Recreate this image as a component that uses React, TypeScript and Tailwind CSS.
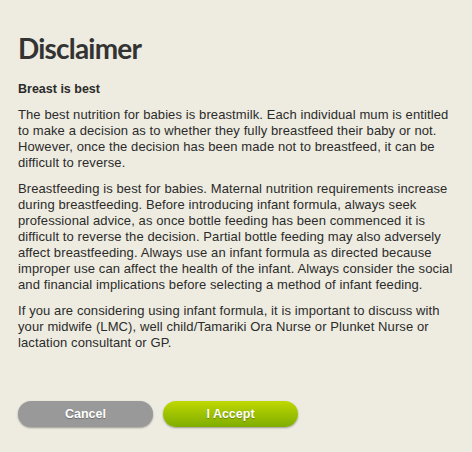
export default function App() {
  return (
    <div className="w-[472px] h-[452px] bg-[#eeebe0] px-[18px] pt-[30px] text-[#2b2b2b]">
      {/* heading */}
      <h1 className="text-[28px] leading-[36px] font-bold tracking-[-0.8px] text-[#333] font-['Lato',sans-serif]">
        Disclaimer
      </h1>

      <div className="mt-[15px] text-[13px] leading-[16px] tracking-[0.1px] font-['Liberation_Sans',Arial,sans-serif] flex flex-col gap-[10px] w-[450px] whitespace-nowrap">
        <p className="font-bold text-[12.5px] tracking-normal">Breast is best</p>
        <p>
          The best nutrition for babies is breastmilk. Each individual mum is entitled
          <br />
          to make a decision as to whether they fully breastfeed their baby or not.
          <br />
          However, once the decision has been made not to breastfeed, it can be
          <br />
          difficult to reverse.
        </p>
        <p>
          Breastfeeding is best for babies. Maternal nutrition requirements increase
          <br />
          during breastfeeding. Before introducing infant formula, always seek
          <br />
          professional advice, as once bottle feeding has been commenced it is
          <br />
          difficult to reverse the decision. Partial bottle feeding may also adversely
          <br />
          affect breastfeeding. Always use an infant formula as directed because
          <br />
          improper use can affect the health of the infant. Always consider the social
          <br />
          and financial implications before selecting a method of infant feeding.
        </p>
        <p>
          If you are considering using infant formula, it is important to discuss with
          <br />
          your midwife (LMC), well child/Tamariki Ora Nurse or Plunket Nurse or
          <br />
          lactation consultant or GP.
        </p>
      </div>

      {/* buttons */}
      <div className="mt-[50px] flex gap-[10px] font-['Liberation_Sans',Arial,sans-serif]">
        <button className="w-[135px] h-[26px] rounded-full bg-[#999999] text-white text-[12.5px] font-bold shadow-[0_1px_2px_rgba(0,0,0,0.35)] [text-shadow:0_1px_1px_rgba(0,0,0,0.3)]">
          Cancel
        </button>
        <button className="w-[135px] h-[26px] rounded-full bg-gradient-to-b from-[#bfd800] to-[#7fad00] text-white text-[12.5px] font-bold shadow-[0_1px_2px_rgba(0,0,0,0.35)] [text-shadow:0_1px_1px_rgba(0,0,0,0.3)]">
          I Accept
        </button>
      </div>
    </div>
  )
}
